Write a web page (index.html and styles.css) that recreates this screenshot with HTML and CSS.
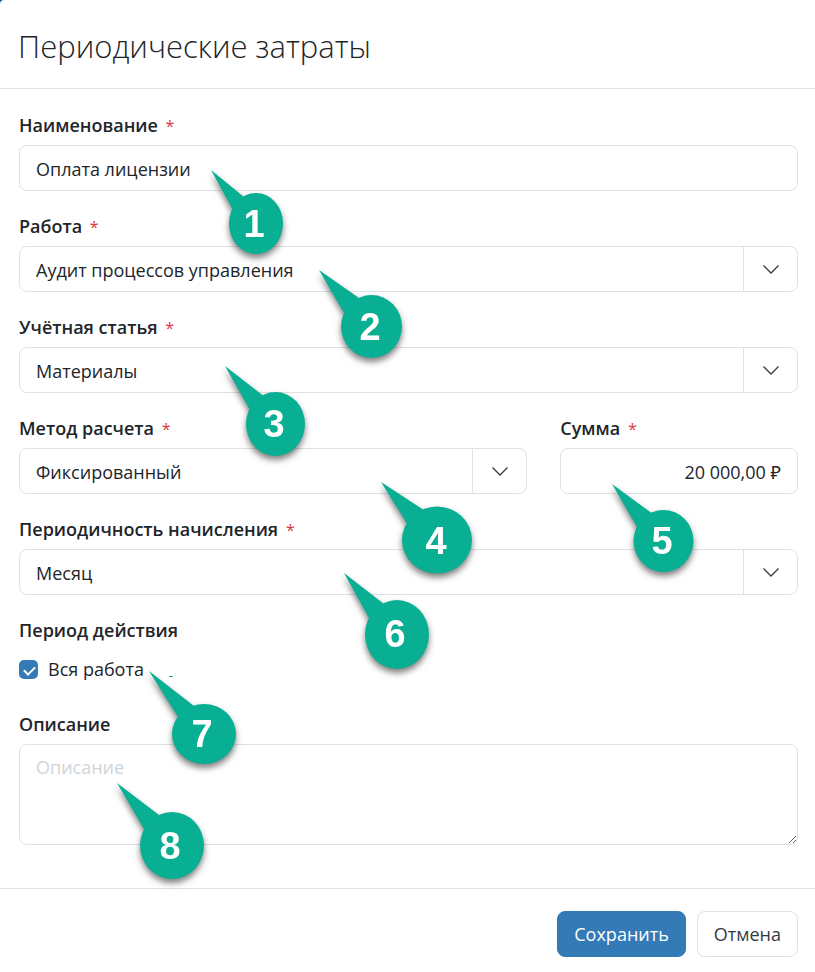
FILE: index.html
```html
<!DOCTYPE html>
<html lang="ru">
<head>
  <meta charset="UTF-8" />
  <meta name="viewport" content="width=device-width, initial-scale=1" />
  <title>Периодические затраты</title>
  <link rel="stylesheet" href="styles.css">
</head>
<body>

  <form class="dialog">
    <header class="dialog-header">
      <h1>Периодические затраты</h1>
    </header>

    <div class="dialog-body">
      <div class="field">
        <label for="name">Наименование <span class="required">*</span></label>
        <input type="text" id="name" class="control" value="Оплата лицензии" />
        <svg class="pin pin-1" width="73" height="85" viewBox="0 0 73 85">
          <path d="M0 0 L33 27 L22 40 Z" />
          <ellipse cx="45" cy="53.5" rx="27" ry="30.5" />
          <text x="43" y="67">1</text>
        </svg>
      </div>

      <div class="field">
        <label for="work">Работа <span class="required">*</span></label>
        <div class="select">
          <select id="work" class="control">
            <option>Аудит процессов управления</option>
          </select>
          <span class="arrow"><svg width="16" height="9" viewBox="0 0 16 9"><path d="M0.5 0.5 L8 8 L15.5 0.5" /></svg></span>
        </div>
        <svg class="pin pin-2" width="84" height="89" viewBox="0 0 84 89">
          <path d="M0 0 L40 28 L25 43 Z" />
          <ellipse cx="52.5" cy="56.5" rx="30.5" ry="31.5" />
          <text x="51" y="70">2</text>
        </svg>
      </div>

      <div class="field">
        <label for="article">Учётная статья <span class="required">*</span></label>
        <div class="select">
          <select id="article" class="control">
            <option>Материалы</option>
          </select>
          <span class="arrow"><svg width="16" height="9" viewBox="0 0 16 9"><path d="M0.5 0.5 L8 8 L15.5 0.5" /></svg></span>
        </div>
        <svg class="pin pin-3" width="81" height="91" viewBox="0 0 81 91">
          <path d="M0 0 L38 29.5 L25 44 Z" />
          <ellipse cx="50.5" cy="58" rx="29.5" ry="32" />
          <text x="49" y="71">3</text>
        </svg>
      </div>

      <div class="row">
        <div class="field method">
          <label for="method">Метод расчета <span class="required">*</span></label>
          <div class="select">
            <select id="method" class="control">
              <option>Фиксированный</option>
            </select>
            <span class="arrow"><svg width="16" height="9" viewBox="0 0 16 9"><path d="M0.5 0.5 L8 8 L15.5 0.5" /></svg></span>
          </div>
          <svg class="pin pin-4" width="92" height="92" viewBox="0 0 92 92">
            <path d="M0 0 L42 27.5 L26 41.5 Z" />
            <ellipse cx="56" cy="58" rx="35" ry="33.5" />
            <text x="55" y="72">4</text>
          </svg>
        </div>

        <div class="field sum">
          <label for="sum">Сумма <span class="required">*</span></label>
          <input type="text" id="sum" class="control amount" value="20 000,00 ₽" />
          <svg class="pin pin-5" width="82" height="89" viewBox="0 0 82 89">
            <path d="M0 0 L39.5 29 L25 43 Z" />
            <ellipse cx="51.5" cy="57" rx="30" ry="31" />
            <text x="50" y="70">5</text>
          </svg>
        </div>
      </div>

      <div class="field">
        <label for="period">Периодичность начисления <span class="required">*</span></label>
        <div class="select">
          <select id="period" class="control">
            <option>Месяц</option>
          </select>
          <span class="arrow"><svg width="16" height="9" viewBox="0 0 16 9"><path d="M0.5 0.5 L8 8 L15.5 0.5" /></svg></span>
        </div>
        <svg class="pin pin-6" width="86" height="97" viewBox="0 0 86 97">
          <path d="M0 0 L40 31 L25 45 Z" />
          <ellipse cx="53" cy="61.5" rx="32" ry="34.5" />
          <text x="51" y="74">6</text>
        </svg>
      </div>

      <fieldset class="field period">
        <legend>Период действия</legend>
        <label class="check" for="whole">
          <input type="checkbox" id="whole" checked />
          Вся работа
        </label>
        <svg class="pin pin-7" width="88" height="94" viewBox="0 0 88 94">
          <path d="M0 0 L45 35 L29 46 Z" />
          <ellipse cx="55" cy="63" rx="32" ry="30" />
          <text x="53" y="76">7</text>
        </svg>
        <span class="dash"></span>
      </fieldset>

      <div class="field">
        <label for="note">Описание</label>
        <textarea id="note" class="control" placeholder="Описание"></textarea>
        <svg class="pin pin-8" width="88" height="97" viewBox="0 0 88 97">
          <path d="M0 0 L42 32 L27 46 Z" />
          <ellipse cx="55" cy="62.5" rx="32" ry="33.5" />
          <text x="53" y="76">8</text>
        </svg>
      </div>
    </div>

    <footer class="dialog-footer">
      <button type="submit" class="btn btn-primary">Сохранить</button>
      <button type="button" class="btn">Отмена</button>
    </footer>
  </form>

</body>
</html>
```
FILE: styles.css
```css
* {
  box-sizing: border-box;
}

body {
  margin: 0;
  background: #0b4a80;
  font-family: "Open Sans", "Noto Sans", sans-serif;
  font-size: 18px;
  line-height: 27px;
  color: #212529;
}

.dialog {
  min-height: 100vh;
  background: #fff;
  border-top-left-radius: 4px;
}

.dialog-header {
  padding: 24px 18px 20px;
  border-bottom: 1px solid #dee2e6;
}

h1 {
  margin: 0;
  font-size: 31px;
  font-weight: 300;
  line-height: 44px;
}

.dialog-body {
  display: flex;
  flex-direction: column;
  gap: 22px;
  padding: 23px 17px 43px 19px;
}

.row {
  display: grid;
  grid-template-columns: repeat(12, 1fr);
  column-gap: 33px;
}

.method {
  grid-column: span 8;
}

.sum {
  grid-column: span 4;
}

.field {
  position: relative;
  display: flex;
  flex-direction: column;
  gap: 6px;
  min-width: 0;
  margin: 0;
  padding: 0;
  border: 0;
}

.field > label,
legend {
  padding: 0;
  font-weight: 600;
}

.required {
  margin-left: 3px;
  font-size: 16px;
  font-weight: 400;
  line-height: 1;
  color: #dc3545;
}

.control {
  display: block;
  width: 100%;
  height: 46px;
  padding: 2px 16px 0;
  border: 1px solid #dee2e6;
  border-radius: 8px;
  background: #fff;
  color: inherit;
  font: inherit;
  appearance: none;
}

.amount {
  text-align: right;
}

textarea.control {
  height: 101px;
  padding-top: 9px;
  resize: vertical;
}

textarea::placeholder {
  color: #ced4da;
}

.select {
  position: relative;
}

.arrow {
  position: absolute;
  top: 1px;
  right: 1px;
  bottom: 1px;
  display: flex;
  align-items: center;
  justify-content: center;
  width: 54px;
  border-left: 1px solid #dee2e6;
  pointer-events: none;
}

.arrow path {
  fill: none;
  stroke: #343a40;
  stroke-width: 1.3;
}

.field > .check {
  display: flex;
  align-items: center;
  gap: 10px;
  margin-top: 12px;
  font-weight: 400;
}

.check input {
  width: 19px;
  height: 19px;
  margin: 0;
  border-radius: 5px;
  background: #337ab7;
  appearance: none;
}

.check input:checked::before {
  content: "";
  display: block;
  width: 9px;
  height: 5px;
  margin: 6px 5px;
  border: solid #fff;
  border-width: 0 0 2px 2px;
  transform: rotate(-45deg);
}

.period {
  margin-bottom: 6px;
}

/* numbered callouts, the tip is the top left corner */
.pin {
  position: absolute;
  z-index: 1;
  overflow: visible;
  fill: #08af92;
  filter: drop-shadow(0 4px 3px rgba(0, 0, 0, 0.5));
  pointer-events: none;
}

.pin text {
  fill: #fff;
  font: bold 38px "Liberation Sans", Arial, sans-serif;
  text-anchor: middle;
}

.pin-1 { left: 192px; top: 58px; }
.pin-2 { left: 300px; top: 57px; }
.pin-3 { left: 206px; top: 52px; }
.pin-4 { left: 362px; top: 67px; }
.pin-5 { left: 52px; top: 69px; }
.pin-6 { left: 325px; top: 57px; }
.pin-7 { left: 130px; top: 27px; }
.pin-8 { left: 98px; top: 72px; }

.dash {
  position: absolute;
  left: 150px;
  top: 32px;
  width: 4px;
  height: 1px;
  background: #08af92;
}

.dialog-footer {
  display: flex;
  justify-content: flex-end;
  gap: 11px;
  padding: 22px 17px 15px;
  border-top: 1px solid #dee2e6;
}

.btn {
  height: 46px;
  padding: 0 16px;
  border: 1px solid #dee2e6;
  border-radius: 8px;
  background: #fff;
  color: #343a40;
  font: inherit;
  cursor: pointer;
}

.btn-primary {
  border-color: #337ab7;
  background: #337ab7;
  color: #fff;
}
```
